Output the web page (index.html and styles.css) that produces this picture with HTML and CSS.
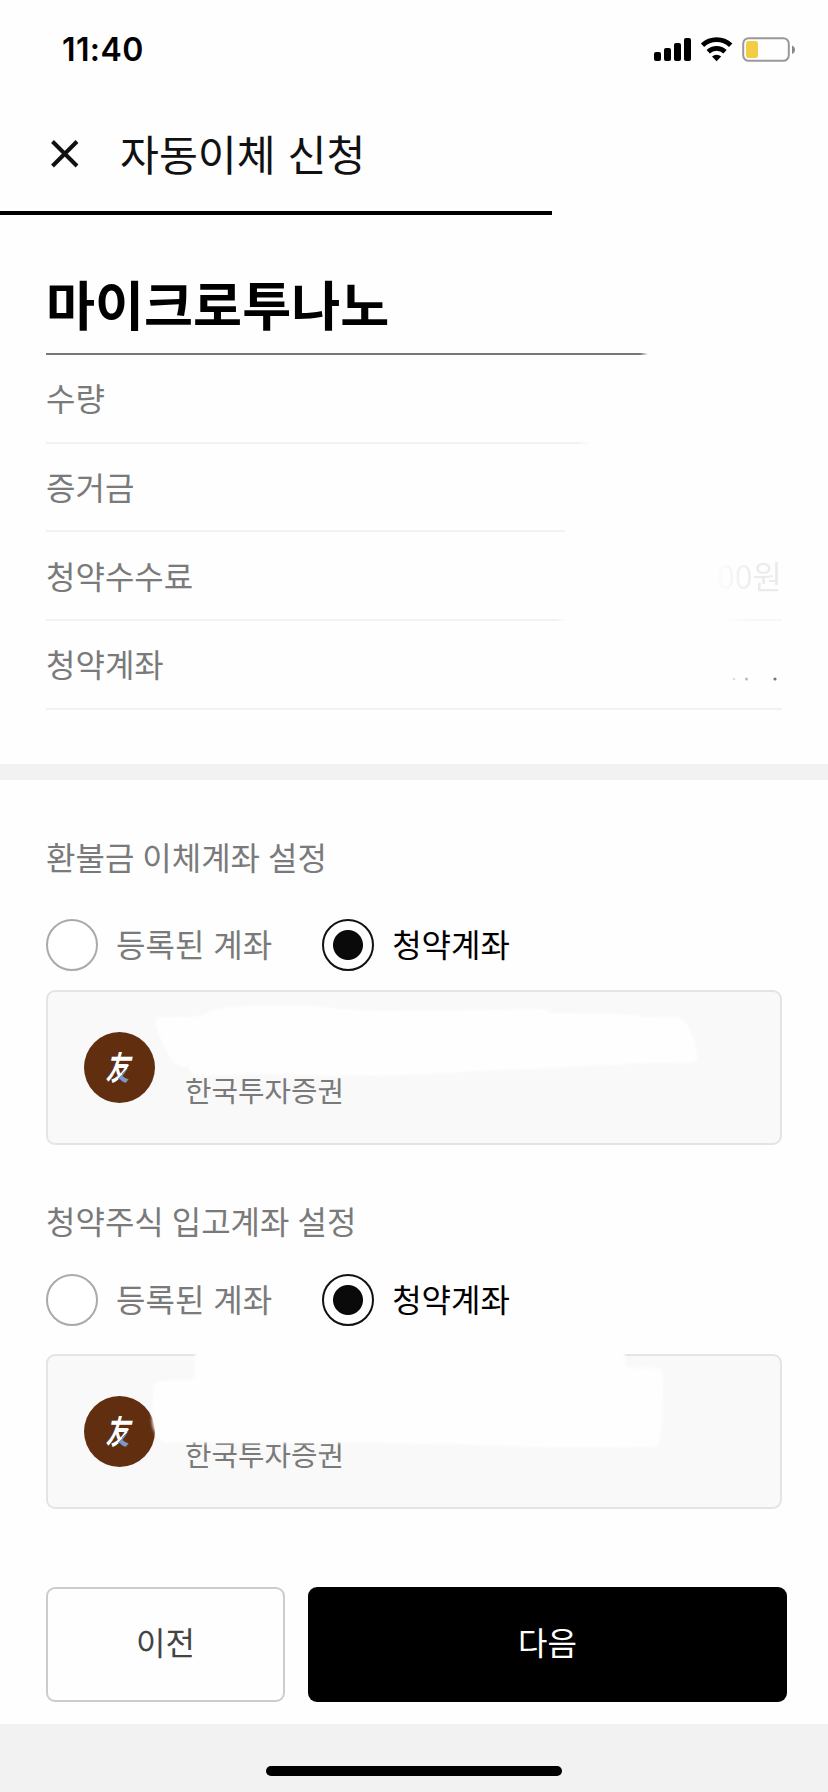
FILE: index.html
```html
<!DOCTYPE html>
<html lang="ko">
<head>
    <meta charset="UTF-8">
    <meta name="viewport" content="width=device-width, initial-scale=1.0">
    <title>자동이체 신청</title>
    <link rel="stylesheet" href="styles.css">
</head>
<body>
    <div class="status-bar">
        <span class="time">11:40</span>
        <svg class="status-icons" width="144" height="28" viewBox="0 0 144 28">
            <rect x="3" y="17" width="7" height="9" rx="2"/>
            <rect x="13" y="13" width="7" height="13" rx="2"/>
            <rect x="23" y="8" width="7" height="18" rx="2"/>
            <rect x="33" y="3" width="7" height="23" rx="2"/>
            <g fill="none" stroke="#000" stroke-width="4.8">
                <path d="M51.5 10.3a20.5 20.5 0 0 1 28.2 0"/>
                <path d="M57.2 16.7a12.3 12.3 0 0 1 16.8 0"/>
            </g>
            <path d="M61 21.500a6.6 6.6 0 0 1 9.2 0L65.600 26.300z"/>
            <rect x="92.200" y="3.200" width="45.600" height="22.600" rx="5.500" fill="none" stroke="#999" stroke-width="2"/>
            <rect x="95" y="6" width="12" height="17" rx="2.500" fill="#f3cc47"/>
            <path d="M141 10.500c4 1.500 4 7 0 8.500z" fill="#888"/>
        </svg>
    </div>

    <header class="header">
        <svg class="close" width="30" height="30" viewBox="0 0 30 30">
            <path d="M2.500 3.500L27 28M27 3.500L2.500 28" fill="none" stroke="#111" stroke-width="4"/>
        </svg>
        <h1>자동이체 신청</h1>
    </header>
    <div class="progress"></div>

    <section class="summary">
        <h2>마이크로투나노</h2>
        <div class="line title-line"></div>
        <div class="row"><span>수량</span></div>
        <div class="line line-1"></div>
        <div class="row"><span>증거금</span></div>
        <div class="line line-2"></div>
        <div class="row"><span>청약수수료</span><span class="fee">00원</span></div>
        <div class="line line-3"></div>
        <div class="row">
            <span>청약계좌</span>
            <svg class="dots" width="50" height="4" viewBox="0 0 50 4">
                <circle cx="2" cy="2" r="1.200" fill="#ddd"/>
                <circle cx="14.500" cy="2" r="1.500" fill="#bbb"/>
                <circle cx="43" cy="2" r="1.600" fill="#777"/>
            </svg>
        </div>
        <div class="line"></div>
    </section>

    <div class="divider"></div>

    <section class="account refund">
        <h3>환불금 이체계좌 설정</h3>
        <div class="options">
            <label class="option"><i class="radio"></i><span>등록된 계좌</span></label>
            <label class="option selected"><i class="radio"></i><span>청약계좌</span></label>
        </div>
        <div class="card">
            <svg class="logo" width="71" height="71" viewBox="0 0 71 71">
                <defs>
                    <linearGradient id="brush" gradientUnits="userSpaceOnUse" x1="15" y1="-7" x2="21" y2="-2">
                        <stop offset="0.500" stop-color="#fff"/>
                        <stop offset="0.500" stop-color="#7d97cb"/>
                    </linearGradient>
                </defs>
                <circle cx="35.500" cy="35.500" r="35.500" fill="#612f10"/>
                <text class="logo-text" transform="translate(21.500 48) skewX(-12) scale(0.820 1.140)" fill="url(#brush)">友</text>
            </svg>
            <span class="bank">한국투자증권</span>
            <svg class="cover" width="736" height="155" viewBox="0 0 736 155">
                <path d="M109 30Q112 27 118 27L155 26Q165 20 180 18Q230 13 275 17Q320 22 355 21L495 19Q502 20 503 23Q550 23 590 25Q598 28 630 27Q640 30 643 38Q652 55 651 70Q651 73 635 73Q570 73 510 78Q440 80 380 84Q300 87 240 84Q200 83 150 86Q143 84 143 77Q128 77 124 68Q118 55 112 43Q109 35 109 30z"/>
            </svg>
        </div>
    </section>

    <section class="account stock">
        <h3>청약주식 입고계좌 설정</h3>
        <div class="options">
            <label class="option"><i class="radio"></i><span>등록된 계좌</span></label>
            <label class="option selected"><i class="radio"></i><span>청약계좌</span></label>
        </div>
        <div class="card">
            <svg class="logo" width="71" height="71" viewBox="0 0 71 71">
                <circle cx="35.500" cy="35.500" r="35.500" fill="#612f10"/>
                <text class="logo-text" transform="translate(21.500 48) skewX(-12) scale(0.820 1.140)" fill="url(#brush)">友</text>
            </svg>
            <span class="bank">한국투자증권</span>
            <svg class="cover" width="736" height="155" viewBox="0 0 736 155">
                <path d="M149 -3H579V12Q582 14 590 14H610Q617 15 617 22Q618 55 614 85Q613 93 604 93Q540 94 480 93Q400 89 330 89H119Q113 87 112 82Q106 76 106 64L107 35Q108 27 116 27L143 26Q149 25 149 18z"/>
            </svg>
        </div>
    </section>

    <div class="buttons">
        <button class="prev">이전</button>
        <button class="next">다음</button>
    </div>

    <footer class="home-area">
        <div class="home-bar"></div>
    </footer>
</body>
</html>
```
FILE: styles.css
```css
* {
    box-sizing: border-box;
}
body {
    margin: 0;
    width: 828px;
    height: 1792px;
    overflow: hidden;
    background-color: #fefefe;
    color: #7a7a7a;
    font-family: 'Noto Sans CJK KR', sans-serif;
    font-size: 32px;
}
h1, h2, h3 {
    margin: 0;
}
.status-bar {
    height: 100px;
    padding: 34px 33px 0 62px;
    display: flex;
    justify-content: space-between;
}
.time {
    height: 32px;
    font-family: Inter, sans-serif;
    font-size: 32px;
    line-height: 32px;
    letter-spacing: 0.4px;
    font-weight: 600;
    color: #000;
}
.status-icons {
    margin-top: 1px;
}
.header {
    height: 111px;
    padding: 0 50px 5px;
    display: flex;
    align-items: center;
    gap: 40px;
}
.header h1 {
    font-size: 42.3px;
    line-height: 60px;
    font-weight: 400;
    color: #111;
}
.progress {
    width: 552px;
    height: 4px;
    background-color: #000;
}
.summary {
    height: 549px;
    padding: 0 46px;
}
.summary h2 {
    height: 138px;
    padding-top: 49px;
    font-size: 53.3px;
    line-height: 77px;
    font-weight: 700;
    color: #000;
}
.line {
    height: 2px;
    background-color: #f2f2f2;
}
.title-line {
    width: 602px;
    background: linear-gradient(to right, #777 594px, #fefefe);
}
.line-1 {
    width: 545px;
    background: linear-gradient(to right, #f2f2f2 530px, #fefefe);
}
.line-2 {
    width: 519px;
}
.line-3 {
    background: linear-gradient(to right, #f2f2f2 510px, #fefefe 520px, #fefefe 680px, #f8f8f8 700px);
}
.row {
    height: 86.700px;
    padding-bottom: 2px;
    display: flex;
    align-items: center;
    justify-content: space-between;
}
.fee {
    color: transparent;
    background: linear-gradient(to right, #fcfcfc, #ebebeb 60%);
    background-clip: text;
}
.dots {
    margin: 31px 0 0;
}
.divider {
    height: 16px;
    background-color: #f2f2f2;
}
.account {
    height: 364px;
    padding: 52px 46px 0;
}
.account h3 {
    height: 48px;
    font-size: 32px;
    line-height: 48px;
    font-weight: 400;
    word-spacing: -1px;
}
.options {
    margin-top: 39px;
    display: flex;
    gap: 50px;
}
.option {
    height: 52px;
    display: flex;
    align-items: center;
    gap: 18px;
}
.option span {
    padding-bottom: 4px;
    line-height: 48px;
}
.radio {
    width: 52px;
    height: 52px;
    border: 2px solid #aaa;
    border-radius: 50%;
    background-color: #fff;
}
.selected {
    color: #000;
}
.selected .radio {
    border-color: #111;
    background: radial-gradient(circle, #0a0a0a 14.500px, #fff 15.500px);
}
.card {
    position: relative;
    height: 155px;
    margin-top: 19px;
    padding: 40px 36px 0;
    display: flex;
    gap: 30px;
    border: 2px solid #e4e4e4;
    border-radius: 9px;
    background-color: #f9f9f9;
}
.logo-text {
    font-family: 'Noto Sans CJK KR', sans-serif;
    font-size: 29px;
    font-weight: 700;
}
.bank {
    margin-top: 36px;
    font-size: 28.800px;
    line-height: 44px;
}
/* blank patch over the account number */
.cover {
    position: absolute;
    left: -2px;
    top: -2px;
    overflow: visible;
    fill: #fefefe;
    filter: blur(1.500px);
}
.stock {
    height: 443px;
}
.stock .options {
    margin-top: 30px;
}
.stock .card {
    margin-top: 28px;
}
.buttons {
    height: 137px;
    padding: 0 41px 22px 46px;
    display: flex;
    gap: 23px;
}
.buttons button {
    height: 115px;
    padding: 0 0 7px;
    font-family: 'Noto Sans CJK KR', sans-serif;
    font-size: 32px;
    border-radius: 9px;
}
.prev {
    width: 239px;
    border: 2px solid #ccc;
    background-color: #fefefe;
    color: #444;
}
.next {
    flex: 1;
    border: none;
    background-color: #000;
    color: #fff;
}
.home-area {
    height: 68px;
    padding-top: 42px;
    background-color: #f2f2f2;
}
.home-bar {
    width: 296px;
    height: 10px;
    margin: 0 auto;
    border-radius: 5px;
    background-color: #000;
}
```
